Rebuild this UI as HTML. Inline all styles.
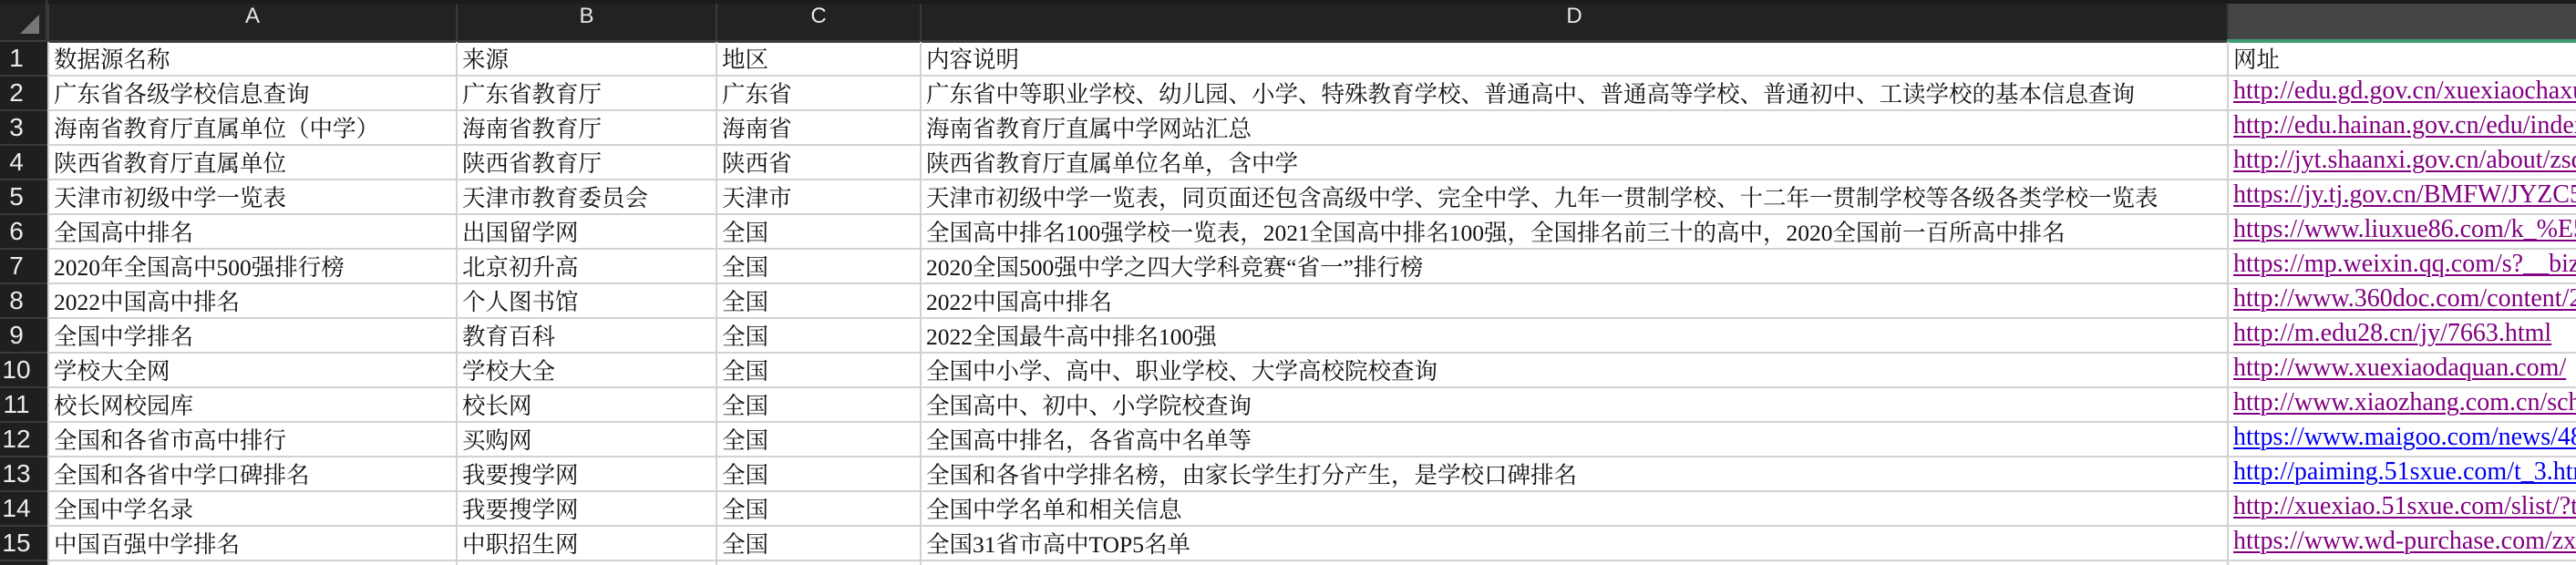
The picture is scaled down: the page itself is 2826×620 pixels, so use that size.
<!DOCTYPE html>
<html><head><meta charset="utf-8">
<style>
*{margin:0;padding:0;box-sizing:border-box}
html,body{width:2826px;height:620px;overflow:hidden;background:#fff;position:relative}
.hdr{position:absolute;left:0;top:0;width:2826px;height:46px;background:#222}
.ch{position:absolute;top:4px;height:40px;line-height:44px;text-align:center;color:#e6e6e6;font:24px "Liberation Sans",sans-serif;border-left:2px solid #3a3a3a}
.hline{position:absolute;left:0;top:44px;width:2826px;height:3px;background:#3c3c3c}
.rh{position:absolute;left:0;width:52px;background:#1f1f1f;color:#ececec;font:28px "Liberation Sans",sans-serif;border-bottom:2px solid #3a3a3a}
.rh span{display:block;width:36px;text-align:center}
.row{position:absolute;left:52px;width:2774px;height:38px;border-bottom:2px solid #d2d2d2}
.c{position:absolute;top:0;height:36px;line-height:36px;overflow:hidden;white-space:nowrap;border-left:2px solid #d2d2d2;padding-left:5px;color:#111;font:25.5px "Liberation Serif","Noto Serif CJK SC",serif}
.a{left:0;width:448px}.b{left:448px;width:285px}.cc{left:733px;width:224px}.d{left:957px;width:1434px}.e{left:2391px;width:400px}
.e span{color:#800080;font:28px "Liberation Serif",serif;text-decoration:underline;text-decoration-thickness:2px;text-underline-offset:3px}
.e span.bl{color:#0000ee}
</style></head><body>
<div class="hdr"></div>
<div style="position:absolute;left:0;top:0;width:2826px;height:4px;background:#1b1b1b"></div>
<svg style="position:absolute;left:0;top:0" width="52" height="46"><polygon points="43,16 43,37 22,37" fill="#777"/></svg>
<div class="ch" style="left:52px;width:448px">A</div>
<div class="ch" style="left:500px;width:285px">B</div>
<div class="ch" style="left:785px;width:224px">C</div>
<div class="ch" style="left:1009px;width:1434px">D</div>
<div class="ch" style="left:2443px;width:383px;background:#454545;border-left:2px solid #3a3a3a"></div>
<div class="hline"></div>
<div style="position:absolute;left:2443px;top:43px;width:383px;height:4px;background:#3f9a74"></div>
<div style="position:absolute;left:50px;top:0;width:2px;height:46px;background:#3a3a3a"></div>

<div class="rh" style="top:46px;height:38px;line-height:36px"><span>1</span></div>
<div class="rh" style="top:84px;height:38px;line-height:36px"><span>2</span></div>
<div class="rh" style="top:122px;height:38px;line-height:36px"><span>3</span></div>
<div class="rh" style="top:160px;height:38px;line-height:36px"><span>4</span></div>
<div class="rh" style="top:198px;height:38px;line-height:36px"><span>5</span></div>
<div class="rh" style="top:236px;height:38px;line-height:36px"><span>6</span></div>
<div class="rh" style="top:274px;height:38px;line-height:36px"><span>7</span></div>
<div class="rh" style="top:312px;height:38px;line-height:36px"><span>8</span></div>
<div class="rh" style="top:350px;height:38px;line-height:36px"><span>9</span></div>
<div class="rh" style="top:388px;height:38px;line-height:36px"><span>10</span></div>
<div class="rh" style="top:426px;height:38px;line-height:36px"><span>11</span></div>
<div class="rh" style="top:464px;height:38px;line-height:36px"><span>12</span></div>
<div class="rh" style="top:502px;height:38px;line-height:36px"><span>13</span></div>
<div class="rh" style="top:540px;height:38px;line-height:36px"><span>14</span></div>
<div class="rh" style="top:578px;height:38px;line-height:36px"><span>15</span></div>
<div class="rh" style="top:616px;height:4px;border:0"></div>

<div class="row" style="top:46px"><div class="c a">数据源名称</div><div class="c b">来源</div><div class="c cc">地区</div><div class="c d">内容说明</div><div class="c e">网址</div></div>
<div class="row" style="top:84px"><div class="c a">广东省各级学校信息查询</div><div class="c b">广东省教育厅</div><div class="c cc">广东省</div><div class="c d">广东省中等职业学校、幼儿园、小学、特殊教育学校、普通高中、普通高等学校、普通初中、工读学校的基本信息查询</div><div class="c e"><span>http://edu.gd.gov.cn/xuexiaochaxun/</span></div></div>
<div class="row" style="top:122px"><div class="c a">海南省教育厅直属单位（中学）</div><div class="c b">海南省教育厅</div><div class="c cc">海南省</div><div class="c d">海南省教育厅直属中学网站汇总</div><div class="c e"><span>http://edu.hainan.gov.cn/edu/index</span></div></div>
<div class="row" style="top:160px"><div class="c a">陕西省教育厅直属单位</div><div class="c b">陕西省教育厅</div><div class="c cc">陕西省</div><div class="c d">陕西省教育厅直属单位名单，含中学</div><div class="c e"><span>http://jyt.shaanxi.gov.cn/about/zsdw</span></div></div>
<div class="row" style="top:198px"><div class="c a">天津市初级中学一览表</div><div class="c b">天津市教育委员会</div><div class="c cc">天津市</div><div class="c d">天津市初级中学一览表，同页面还包含高级中学、完全中学、九年一贯制学校、十二年一贯制学校等各级各类学校一览表</div><div class="c e"><span>https://jy.tj.gov.cn/BMFW/JYZC5</span></div></div>
<div class="row" style="top:236px"><div class="c a">全国高中排名</div><div class="c b">出国留学网</div><div class="c cc">全国</div><div class="c d">全国高中排名100强学校一览表，2021全国高中排名100强，全国排名前三十的高中，2020全国前一百所高中排名</div><div class="c e"><span>https://www.liuxue86.com/k_%E5%85</span></div></div>
<div class="row" style="top:274px"><div class="c a">2020年全国高中500强排行榜</div><div class="c b">北京初升高</div><div class="c cc">全国</div><div class="c d">2020全国500强中学之四大学科竞赛“省一”排行榜</div><div class="c e"><span>https://mp.weixin.qq.com/s?__biz=M</span></div></div>
<div class="row" style="top:312px"><div class="c a">2022中国高中排名</div><div class="c b">个人图书馆</div><div class="c cc">全国</div><div class="c d">2022中国高中排名</div><div class="c e"><span>http://www.360doc.com/content/22</span></div></div>
<div class="row" style="top:350px"><div class="c a">全国中学排名</div><div class="c b">教育百科</div><div class="c cc">全国</div><div class="c d">2022全国最牛高中排名100强</div><div class="c e"><span>http://m.edu28.cn/jy/7663.html</span></div></div>
<div class="row" style="top:388px"><div class="c a">学校大全网</div><div class="c b">学校大全</div><div class="c cc">全国</div><div class="c d">全国中小学、高中、职业学校、大学高校院校查询</div><div class="c e"><span>http://www.xuexiaodaquan.com/</span></div></div>
<div class="row" style="top:426px"><div class="c a">校长网校园库</div><div class="c b">校长网</div><div class="c cc">全国</div><div class="c d">全国高中、初中、小学院校查询</div><div class="c e"><span>http://www.xiaozhang.com.cn/school</span></div></div>
<div class="row" style="top:464px"><div class="c a">全国和各省市高中排行</div><div class="c b">买购网</div><div class="c cc">全国</div><div class="c d">全国高中排名，各省高中名单等</div><div class="c e"><span class="bl">https://www.maigoo.com/news/485</span></div></div>
<div class="row" style="top:502px"><div class="c a">全国和各省中学口碑排名</div><div class="c b">我要搜学网</div><div class="c cc">全国</div><div class="c d">全国和各省中学排名榜，由家长学生打分产生，是学校口碑排名</div><div class="c e"><span class="bl">http://paiming.51sxue.com/t_3.html</span></div></div>
<div class="row" style="top:540px"><div class="c a">全国中学名录</div><div class="c b">我要搜学网</div><div class="c cc">全国</div><div class="c d">全国中学名单和相关信息</div><div class="c e"><span>http://xuexiao.51sxue.com/slist/?t=3</span></div></div>
<div class="row" style="top:578px"><div class="c a">中国百强中学排名</div><div class="c b">中职招生网</div><div class="c cc">全国</div><div class="c d">全国31省市高中TOP5名单</div><div class="c e"><span>https://www.wd-purchase.com/zxzx</span></div></div>
<div style="position:absolute;left:52px;top:616px;width:2774px;height:4px">
<div style="position:absolute;left:0;top:0;width:2px;height:4px;background:#d2d2d2"></div>
<div style="position:absolute;left:448px;top:0;width:2px;height:4px;background:#d2d2d2"></div>
<div style="position:absolute;left:733px;top:0;width:2px;height:4px;background:#d2d2d2"></div>
<div style="position:absolute;left:957px;top:0;width:2px;height:4px;background:#d2d2d2"></div>
<div style="position:absolute;left:2391px;top:0;width:2px;height:4px;background:#d2d2d2"></div>
</div>
</body></html>
